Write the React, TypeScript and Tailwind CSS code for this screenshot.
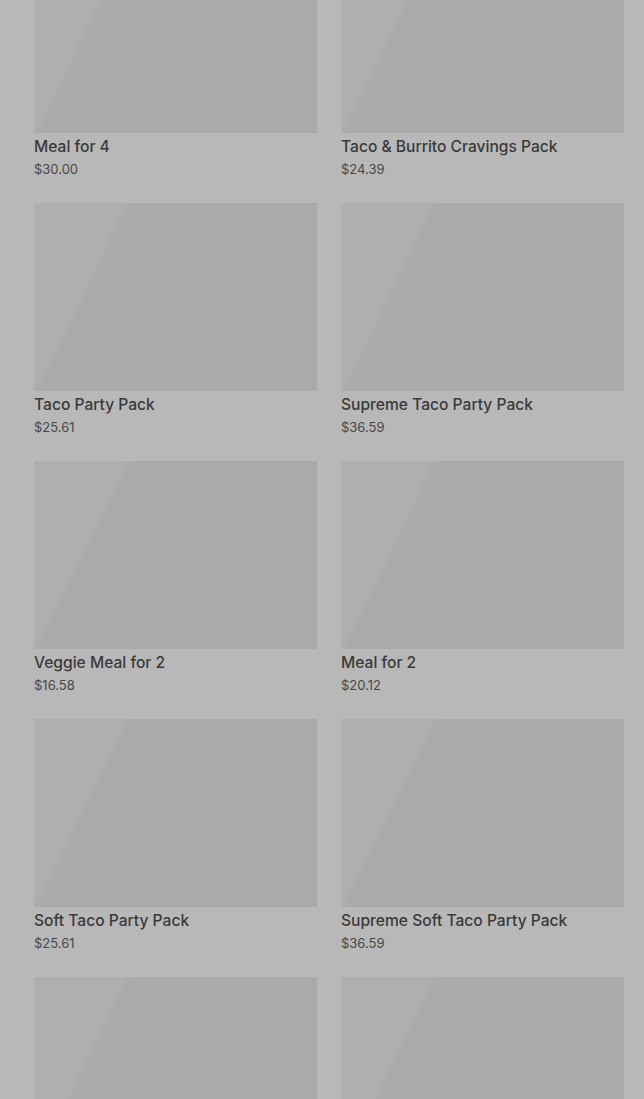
import React from 'react'

type Product = {
  name: string
  price: string
}

const products: Product[] = [
  { name: 'Meal for 4', price: '$30.00' },
  { name: 'Taco & Burrito Cravings Pack', price: '$24.39' },
  { name: 'Taco Party Pack', price: '$25.61' },
  { name: 'Supreme Taco Party Pack', price: '$36.59' },
  { name: 'Veggie Meal for 2', price: '$16.58' },
  { name: 'Meal for 2', price: '$20.12' },
  { name: 'Soft Taco Party Pack', price: '$25.61' },
  { name: 'Supreme Soft Taco Party Pack', price: '$36.59' },
  { name: 'Cravings Value Meal', price: '$9.49' },
  { name: 'Burrito Party Pack', price: '$24.39' },
]

function ProductCard({ name, price }: Product) {
  return (
    <div className="flex flex-col">
      {/* image placeholder with loading shimmer */}
      <div className="h-[188px] w-full bg-[linear-gradient(116deg,#afafaf_0%,#afafaf_24%,#aaaaaa_26%,#aaaaaa_100%)]" />
      <h3 className="mt-[2px] text-[15.6px] leading-6 font-medium text-[#3a3a3a] truncate">
        {name}
      </h3>
      <p className="text-[13px] leading-[21px] text-[#484848]">{price}</p>
    </div>
  )
}

export default function App() {
  return (
    <div
      className="h-[1099px] bg-[#b8b8b8] overflow-hidden"
      style={{ fontFamily: 'Inter, Roboto, "Liberation Sans", sans-serif' }}
    >
      <div className="grid grid-cols-2 gap-x-6 gap-y-[23px] pl-[34px] pr-5 -mt-[55px]">
        {products.map((p, i) => (
          <ProductCard key={i} {...p} />
        ))}
      </div>
    </div>
  )
}
